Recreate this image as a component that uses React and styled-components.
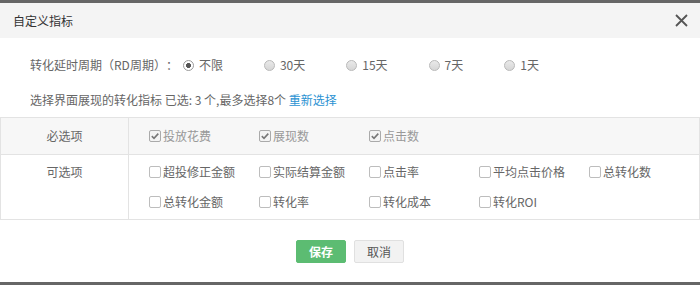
import React, { useState } from "react";
import styled, { createGlobalStyle } from "styled-components";

const GlobalStyle = createGlobalStyle`
  html, body {
    margin: 0;
    padding: 0;
    background: #fff;
  }
  body {
    font-family: "Noto Sans CJK SC", "Microsoft YaHei", sans-serif;
    font-size: 12px;
    color: #666;
    text-spacing-trim: space-all;
  }
`;

const PERIODS = ["不限", "30天", "15天", "7天", "1天"];
const REQUIRED = ["投放花费", "展现数", "点击数"];
const OPTIONAL = [
  "超投修正金额",
  "实际结算金额",
  "点击率",
  "平均点击价格",
  "总转化数",
  "总转化金额",
  "转化率",
  "转化成本",
  "转化ROI",
];

const Radio = ({ checked, label, onClick }) => (
  <RadioLabel onClick={onClick}>
    <RadioDot checked={checked} />
    <span>{label}</span>
  </RadioLabel>
);

const Check = ({ checked, disabled, label, onClick }) => (
  <CheckLabel disabled={disabled} onClick={onClick}>
    <CheckBox checked={checked} disabled={disabled}>
      {checked && (
        <svg width="10" height="10" viewBox="0 0 10 10">
          <path d="M1.8 5.2 L4 7.3 L8.3 2.6" fill="none" stroke="#777" strokeWidth="1.6" />
        </svg>
      )}
    </CheckBox>
    <span>{label}</span>
  </CheckLabel>
);

const App = () => {
  const [period, setPeriod] = useState("不限");
  const [picked, setPicked] = useState([]);

  const toggle = (name) =>
    setPicked((p) => (p.includes(name) ? p.filter((x) => x !== name) : [...p, name]));

  return (
    <Dialog>
      <GlobalStyle />
      <Header>
        <Title>自定义指标</Title>
        <Close aria-label="close">
          <svg width="13" height="13" viewBox="0 0 13 13">
            <path d="M1 1 L12 12 M12 1 L1 12" stroke="#555" strokeWidth="1.8" />
          </svg>
        </Close>
      </Header>

      <Body>
        <Line>
          <span>转化延时周期（RD周期）：</span>
          <RadioGroup>
            {PERIODS.map((p) => (
              <Radio key={p} label={p} checked={period === p} onClick={() => setPeriod(p)} />
            ))}
          </RadioGroup>
        </Line>

        <Hint>
          选择界面展现的转化指标 已选: 3 个,最多选择8个 <Link>重新选择</Link>
        </Hint>
      </Body>

      <Table>
        <RowLabel shaded>必选项</RowLabel>
        <Cell shaded>
          {REQUIRED.map((m) => (
            <Check key={m} label={m} checked disabled />
          ))}
        </Cell>
        <RowLabel top last>可选项</RowLabel>
        <Cell last>
          {OPTIONAL.map((m) => (
            <Check key={m} label={m} checked={picked.includes(m)} onClick={() => toggle(m)} />
          ))}
        </Cell>
      </Table>

      <Footer>
        <Button primary>保存</Button>
        <Button>取消</Button>
      </Footer>
    </Dialog>
  );
};

const Dialog = styled.div`
  width: 700px;
  height: 285px;
  box-sizing: border-box;
  border-top: 3px solid #666;
  border-bottom: 3px solid #666;
  background: #fff;
  display: flex;
  flex-direction: column;
`;

const Header = styled.div`
  height: 35px;
  flex-shrink: 0;
  display: flex;
  align-items: center;
  justify-content: space-between;
  padding: 0 12px 0 13px;
  background: #f4f4f4;
`;

const Title = styled.div`
  font-size: 12px;
  color: #333;
  line-height: 16px;
  padding-top: 1px;
`;

const Close = styled.button`
  border: none;
  background: transparent;
  padding: 0;
  width: 14px;
  height: 14px;
  display: flex;
  align-items: center;
  justify-content: center;
  cursor: pointer;
`;

const Body = styled.div`
  padding: 16px 0 0 30px;
`;

const Line = styled.div`
  display: flex;
  align-items: center;
  height: 22px;
  line-height: 22px;
`;

const RadioGroup = styled.div`
  display: flex;
  gap: 41px;
  margin-left: 5px;
`;

const RadioLabel = styled.label`
  display: flex;
  align-items: center;
  gap: 5px;
  cursor: pointer;
`;

const RadioDot = styled.span`
  width: 11px;
  height: 11px;
  border-radius: 50%;
  box-sizing: border-box;
  border: 1px solid ${(p) => (p.checked ? "#9a9a9a" : "#b9b9b9")};
  background: ${(p) =>
    p.checked
      ? "radial-gradient(circle, #555 0 2.2px, #fff 2.8px)"
      : "linear-gradient(#e9e9e9, #d6d6d6)"};
`;

const Hint = styled.div`
  margin-top: 13px;
  height: 22px;
  line-height: 22px;
`;

const Link = styled.a`
  color: #2a92d2;
  cursor: pointer;
`;

const Table = styled.div`
  margin-top: 6px;
  display: grid;
  grid-template-columns: 128px 1fr;
  border: 1px solid #e3e3e3;
  border-bottom: none;
`;

const RowLabel = styled.div`
  box-sizing: border-box;
  border-right: 1px solid #e3e3e3;
  border-bottom: 1px solid #e3e3e3;
  background: ${(p) => (p.shaded ? "#f7f7f7" : "#fff")};
  display: flex;
  justify-content: center;
  align-items: ${(p) => (p.top ? "flex-start" : "center")};
  padding-top: ${(p) => (p.top ? "7px" : "0")};
  line-height: 20px;
  color: #666;
  min-height: 37px;
`;

const Cell = styled.div`
  box-sizing: border-box;
  border-bottom: 1px solid #e3e3e3;
  background: ${(p) => (p.shaded ? "#f7f7f7" : "#fff")};
  display: grid;
  grid-template-columns: repeat(5, 110px);
  row-gap: 10px;
  align-content: center;
  padding: ${(p) => (p.last ? "7px 0 7px 20px" : "0 0 0 20px")};
  min-height: 37px;
`;

const CheckLabel = styled.label`
  display: flex;
  align-items: center;
  gap: 2px;
  height: 20px;
  line-height: 20px;
  white-space: nowrap;
  color: ${(p) => (p.disabled ? "#999" : "#666")};
  cursor: ${(p) => (p.disabled ? "default" : "pointer")};
`;

const CheckBox = styled.span`
  width: 12px;
  height: 12px;
  box-sizing: border-box;
  border: 1px solid ${(p) => (p.disabled ? "#aaa" : "#bdbdbd")};
  border-radius: 2px;
  background: ${(p) => (p.disabled ? "#f3f3f3" : "#fff")};
  display: flex;
  align-items: center;
  justify-content: center;
`;

const Footer = styled.div`
  display: flex;
  justify-content: center;
  gap: 8px;
  margin-top: 20px;
`;

const Button = styled.button`
  height: 23px;
  padding: 0 12px;
  font-family: inherit;
  font-size: 12px;
  border-radius: 2px;
  cursor: pointer;
  border: 1px solid ${(p) => (p.primary ? "#5cbc72" : "#e0e0e0")};
  background: ${(p) => (p.primary ? "#5cbc72" : "#f2f2f2")};
  color: ${(p) => (p.primary ? "#fff" : "#555")};
  font-weight: ${(p) => (p.primary ? "bold" : "normal")};
`;

export default App;
